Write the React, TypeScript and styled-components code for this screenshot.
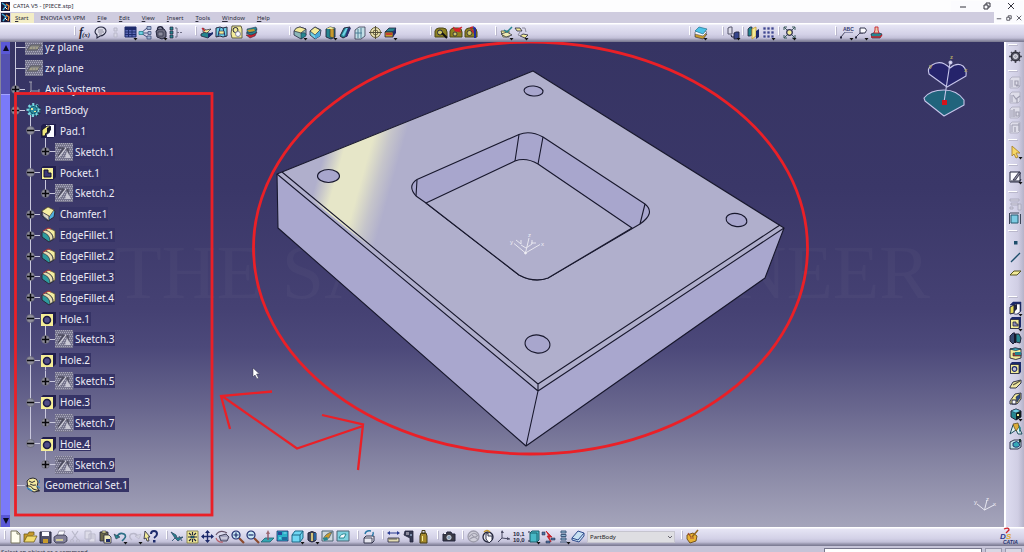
import React from 'react';
import styled, { createGlobalStyle } from 'styled-components';

const GlobalStyle = createGlobalStyle`
  * { box-sizing: border-box; }
  body { margin: 0; overflow: hidden; font-family: "Noto Sans", "Open Sans", sans-serif; }
  button, input, select { font: inherit; color: inherit; margin: 0; padding: 0; border: 0; background: none; }
  ul { list-style: none; margin: 0; padding: 0; }
`;

/* ---------- icon drawings, 15 x 15 ---------- */

type Shape = [d: string, fill?: string, stroke?: string, width?: number];
interface Drawing { shapes: Shape[]; texts?: [string, number, number, number, string][] }

const K = '#23253c';
const N = '#1d2a6b';
const T = '#25858f';
const C = '#6fd0e6';
const Y = '#f3eb98';
const O = '#c79a2c';
const G = '#8b8a9c';
const L = '#b9b8ca';
const W = '#fbfbff';
const R = '#c8232c';

const ring = (x: number, y: number, r: number) =>
  `M${x - r} ${y}a${r} ${r} 0 1 0 ${r * 2} 0a${r} ${r} 0 1 0 ${-r * 2} 0z`;

const faded = (d: string): Drawing => ({
  shapes: [['M2 4l2-2h8v9l-2 2h-8z', '#dedde9', '#b3b2c4', 1], ['M2 5h3v7h-3z', '#bfbecf'], [d, 'none', '#9e9db0', 1.2]],
});

const icons: Record<string, Drawing> = {
  formula: { shapes: [], texts: [['f', 1, 11, 12, K], ['(x)', 4, 12, 7, K]] },
  comment: { shapes: [['M2 7c0-3 3-5 6-5s5 2 5 4-3 5-6 5l-3 2 0-3c-1-1-2-2-2-3z', '#dcdbe8', K, 1.1], ['M5 5h5M5 7h6M6 9h3', 'none', G, 1]] },
  ghost: { shapes: [['M6 3h3v3h-3zM6 8h3v4h-3z', '#d8d7e6', L, 1]] },
  table: { shapes: [['M2 2h11v10h-11z', '#5b68b4', N, 1], ['M2 2h11v3h-11z', N], ['M2 7h11M2 9.5h11M5.5 4v8M9 4v8', 'none', N, 1]] },
  graph: { shapes: [['M3 8l6-5M3 8h7M3 8l6 4', 'none', '#44507c', 1], ['M1 6.500h4v3h-4z', C, T, 0.8], ['M9 1.500h4v3h-4zM10 6.500h3v3h-3zM9 11h4v3h-4z', '#9fb5d2', '#44507c', 0.8]] },
  lock: { shapes: [['M4.500 7V4.500a2.500 2.500 0 0 1 5.500 0V7', 'none', K, 1.4], ['M3 6l3-2h5l2 3v5l-4 2-5-2z', '#6b6a7e', K, 1], ['M5 7h5v4h-5z', G, K, 0.6]] },
  tree: { shapes: [['M2 2h3v3h-3zM2 6h3v3h-3zM2 10h3v3h-3z', T, K, 0.7], ['M7 3h2v9h-2M9 7.500h2M12 7.500h2', 'none', '#6f6e86', 1]] },
  material: { shapes: [['M2 9l4-2 7 2-4 4-7-2z', T, K, 0.8], ['M4 3l3 2 5-1-4 4-4-1z', Y, K, 0.7], ['M3 3l3 3', 'none', R, 1.4], ['M9 9l5-2v2l-5 4z', N]] },
  catalog: { shapes: [['M2 3l4-1 3 1 4-1v9l-4 1-3-1-4 1z', C, K, 1], ['M6 3l-2 8M9 3l2 8', 'none', N, 1], ['M5 6h5v3h-5z', Y, K, 0.6]] },
  measureBox: { shapes: [['M3 1h9l1 3v9h-10l-1-4z', Y, '#5f5c45', 1], [ring(6.5, 5, 2.5), 'none', K, 1], [ring(9, 9, 2.5), W, G, 1]] },
  layers: { shapes: [['M2 10l7-1 4-2-2 4-5 2z', R, K, 0.5], ['M2 8l6-1 5-3-1 4-5 2z', T, K, 0.5], ['M3 4l9-2 1 2-4 3-6 1z', T, K, 0.5], ['M3 5l7-1 1 2-6 1z', O]] },
  fillet: { shapes: [['M1 6q2-4 6-4l6 2v6l-5 4-7-4z', '#8bb6b8', K, 0.8], ['M1 6q2-4 6-4l6 2-5 4z', Y, K, 0.7], ['M8 8q4-1 5 1v2l-5 3z', T, K, 0.5]] },
  chamfer: { shapes: [['M2 6l5-4 6 3-1 6-5 3-5-4z', C, K, 0.8], ['M2 6l5-4 5 3-5 5z', Y, K, 0.7], ['M7 10l5-4v5l-5 3z', '#4aa8d8']] },
  draft: { shapes: [['M3 4l4-2 5 1v9l-4 2-5-2z', T, K, 0.9], ['M7 3l4 1v9l-4-1z', O, K, 0.6], ['M3 4l4-2 5 1-3 1z', Y]] },
  shell: { shapes: [['M2 11l4-8 6-1-3 9-4 2z', T, K, 1], ['M4 10l4-7 2 0-4 8z', C], ['M10 3l3 0-4 9-2 0z', '#2c3070']] },
  thickness: { shapes: [['M2 5l4-3h6v9l-4 3h-6z', '#c3dfe6', K, 0.7], ['M5 4v9M8 3v10M2 8h7', 'none', '#4a7f96', 1]] },
  thread: { shapes: [[ring(7.5, 7.5, 5), '#efe7b8', '#665f35', 1], [ring(7.5, 7.5, 2.5), 'none', '#665f35', 1], ['M7.500 1v13M1 7.500h13', 'none', '#554f3a', 1]] },
  removeFace: { shapes: [['M2 7l4-4h7l-3 4z', T, K, 0.8], ['M2 7h8v5h-8z', O, K, 0.8], ['M10 7l3-4v5l-3 4z', N], ['M3 9h6', 'none', R, 1.5]] },
  scene: { shapes: [['M1 6q1-3 4-3h4q4 0 4 4v5h-12z', '#8c8120', '#4c4718', 1], [ring(6, 7.5, 2.5), '#cfc766', K, 1], ['M8 8l5 5', 'none', '#111', 2]] },
  sceneStop: { shapes: [['M1 6q1-3 4-3h4q4 0 4 4v5h-12z', '#8c8120', '#4c4718', 1], [ring(6, 9, 2), '#cfc766', K, 0.8], ['M4 2l3 2 6-2-3 4 2 1-6-1z', '#e3202a', R, 0.7]] },
  scenePin: { shapes: [['M1 6q1-3 4-3h4q4 0 4 4v5h-12z', '#8c8120', '#4c4718', 1], [ring(5.5, 8, 2.5), '#cfc766', K, 0.8], ['M6 3l3-1M7 4l4 5', 'none', R, 1.4], ['M9 1l3 2 0 10-2 0 0-5z', '#1f2ca0']] },
  stack: { shapes: [['M2 6h8v6h-6z', Y, '#5c5b44', 0.9], ['M2 9l5 3 6-2-5-3z', '#efe9b0', K, 0.7], ['M5 5l3 2 5-5', 'none', T, 1.5]] },
  replace: { shapes: [['M1 3h5l2 3h-5z', Y, K, 0.8], ['M6 11l3-2 5 1-3 3z', Y, K, 0.8], ['M8 3h3l1 4M6 7l-2 3 3 1', 'none', G, 1]] },
  stackBlue: { shapes: [['M2 9l4-2 8 2-4 5-8-2z', O, K, 0.6], ['M2 7l4-2 8 2-4 4-8-2z', W, '#556', 0.6], ['M2 6l4-4 8 2-4 5z', '#4cc3e8', '#23718c', 0.7]] },
  swap: { shapes: [['M2 3l2-1h2v7h-4z', '#dcdbe8', '#55546a', 1], ['M8 8l2-1h3v6l-2 1h-3z', '#35458c', K, 0.9], ['M5 10q0 3 3 2', 'none', K, 1]] },
  mirror: { shapes: [['M2 4l2-2h2v8l-2 1h-2z', T, K, 0.8], ['M6 4l4-2v9l-4 3z', Y, O, 0.8], ['M10 6l3-2v8l-3 2z', N]] },
  grid: { shapes: [['M2 2h3v3h-3zM6 2h3v3h-3zM10 2h3v3h-3zM2 6h3v3h-3zM6 6h3v3h-3zM10 6h3v3h-3zM2 10h3v3h-3zM6 10h3v3h-3zM10 10h3v3h-3z', '#3e468f', '#d6d4ea', 0.7]] },
  explode: { shapes: [[ring(7.5, 7.5, 2.8), Y, '#335', 1.3], ['M2 5v-3h3M10 2h3v3M13 10v3h-3M5 13h-3v-3M2 2l3 3M13 2l-3 3M13 13l-3-3M2 13l3-3', 'none', '#3c5a5c', 1]] },
  abc: { shapes: [['M2 12l4-5', 'none', K, 0.8], ['M1 11.500h2v2h-2z', K], ['M5 7.500h9', 'none', '#777a9c', 0.8]], texts: [['ABC', 4, 6, 5, '#33386e']] },
  flag: { shapes: [['M1 11.500h2v2h-2z', K], ['M2 12l4-4h3', 'none', K, 0.8], ['M6 3h5q3 2 0 5h-5z', W, K, 0.9]] },
  stamp: { shapes: [['M2 9l5-2 6 2-2 4h-8z', T, K, 0.7], ['M2 12l9 0 2-2', 'none', R, 1.3], ['M6 2h3v3l1 3h-5l1-3z', '#e9c6a8', R, 0.9]] },

  newFile: { shapes: [['M3 2h6l3 3v9h-9z', '#fffef0', '#77755f', 1], ['M9 2v3h3', 'none', '#77755f', 1]] },
  open: { shapes: [['M1 13V5h4l1-2h5v3', O, '#6d5b1b', 0.8], ['M1 13l3-6h10l-3 6z', '#f2dc71', '#6d5b1b', 0.8]] },
  save: { shapes: [['M2 3h11v11h-11z', '#505069', K, 1], ['M4 3h7v4h-7z', W], ['M5 10h5v4h-5z', O]] },
  print: { shapes: [['M4 7l2-5h6l-2 5z', W, G, 0.8], ['M1 8l3-2h8l2 2v4l-3 2h-8l-2-2z', '#838199', K, 0.7], ['M3 11h7', 'none', Y, 1.4]] },
  cut: { shapes: [['M4 2l6 9M10 2l-6 9', 'none', L, 1.2], [ring(4, 12, 1.5), 'none', L, 1], [ring(10, 12, 1.5), 'none', L, 1]] },
  copy: { shapes: [['M2 2h6v8h-6zM6 5h6v8h-6z', '#dddce8', L, 1], ['M7 7h4M7 9h4', 'none', L, 0.8]] },
  paste: { shapes: [['M2 3h8v9h-8z', '#6a6748', K, 0.8], ['M4 2h4v2h-4z', Y, K, 0.6], ['M6 6h5l2 2v6h-7z', '#efebbb', K, 0.8], ['M8 10h4v3h-4z', N]] },
  undo: { shapes: [['M4 8q2-5 7-3 3 2 0 5l-2 2', 'none', '#2b6f86', 1.6], ['M1 5l2 5 4-2z', T, K, 0.5]] },
  redo: { shapes: [['M10 8q-2-5-7-3-3 3 1 6', 'none', L, 1.5], ['M13 5l-2 5-4-3z', '#d2d1e0', L, 0.7]] },
  help: { shapes: [['M2 2l5 6-2 0 1 4-2 0-1-3-2 1z', Y, K, 0.8], ['M8 5q0-3 3-3t3 3q0 2-3 4', 'none', N, 2], ['M10 11h2.500v2.500h-2.500z', N]] },
  fly: { shapes: [['M1 3l5 3 1 3 6-1-5 4-3-3z', T, '#2d4966', 0.8], ['M2 12l4-4M9 7l3 5', 'none', '#45607e', 1]] },
  fitAll: { shapes: [['M2 2h11v12h-11z', Y, '#8b8756', 1], ['M4 4l2 2M11 4l-2 2M4 12l2-2M11 12l-2-2M7.500 3v3M7.500 10v3M3 8h3M9 8h3', 'none', K, 1.2], ['M6 7h3v2h-3z', T, K, 0.7]] },
  pan: { shapes: [['M7.500 2v11M2 7.500h11', 'none', N, 1.4], ['M7.500 1l2.500 3h-5zM7.500 14l2.500-3h-5zM1 7.500l3-2.500v5zM14 7.500l-3-2.500v5z', N]] },
  rotate: { shapes: [['M1 6q3-5 9-3l2 1', 'none', '#66546a', 1.2], ['M4 7l7-2 3 3-2 4h-6z', '#a7a6c1', K, 0.8], ['M1 9q2 5 7 4', 'none', '#b8606a', 1.2], ['M6 9h6', 'none', W, 0.8]] },
  zoomIn: { shapes: [['M9 9l5 5', 'none', '#8c4a2d', 2.2], [ring(6, 6, 4), '#c6e6f2', N, 1.2], ['M3.500 6h5M6 3.500v5', 'none', N, 1.2]] },
  zoomOut: { shapes: [['M9 9l5 5', 'none', '#8c4a2d', 2.2], [ring(6, 6, 4), '#c6e6f2', N, 1.2], ['M3.500 6h5', 'none', N, 1.2]] },
  normalView: { shapes: [['M1 13l4-4h9l-4 4z', '#34a6b3', '#1e5f70', 0.8], ['M8 11V5', 'none', '#8b5468', 1.4], ['M8 1l2 4h-4z', '#9b6a74']] },
  multiView: { shapes: [['M2 2h11v10h-11z', '#2bb1c8', N, 0.8], ['M3 3h4v3h-4z', '#274a9b'], ['M7 8h5v3h-5z', '#1f6a9e'], ['M8.500 4h3M4 9h2', 'none', C, 1.4]] },
  cube: { shapes: [['M2 6l3-4h8v7l-3 4h-8z', '#6fd6f2', '#1b6685', 1], ['M2 6h8v7M10 6l3-4', 'none', '#1b6685', 1]] },
  shading: { shapes: [['M3 4q4-3 8 0v7q-4 4-8 0z', '#42495e', K, 1], ['M6 4h2v8h-2z', '#d0c27a'], ['M9 4h2v7h-2z', '#2563a0']] },
  hideShow: { shapes: [['M2 2h11v10h-11z', '#cdd7dc', '#4b6272', 1], ['M3 10q3-6 9-7l-3 6z', O, '#4b6272', 0.8], ['M3 9l4-1 1 3-4 1z', T]] },
  swapSpace: { shapes: [['M2 2h12v10h-12z', '#7fd1df', '#4b6272', 1], ['M4 9q2-5 7-4l-2 4z', W, T, 1]] },
  exchange: { shapes: [['M3 9l2-2h8v5l-2 2h-8z', '#e6e6ef', K, 0.9], ['M3 9h8v5', 'none', K, 0.8], ['M4 5q1-4 6-3M12 3q1 2-1 4', 'none', '#2675a5', 1.4]] },
  measure: { shapes: [['M3 4h9', 'none', '#283a90', 1], ['M1 4l3-2v4zM14 4l-3-2v4z', '#283a90'], ['M2 9h11v4h-11z', '#e4ddb3', K, 0.8], ['M4 9v2M6 9v2M8 9v2M10 9v2', 'none', K, 0.7]] },
  measureItem: { shapes: [['M4 2h8v11h-3v-4l-6-3z', '#353a52', K, 0.8], ['M5 3h3v3h-3z', G], ['M9 5h2v2h-2z', '#7b8ca8']] },
  inertia: { shapes: [['M5 4h5l1 3v7h-7v-7z', '#a68a2c', '#433a16', 1], ['M6 1.500h3v3h-3z', 'none', '#433a16', 1], ['M6 7h1v5h-1z', Y]] },
  camera: { shapes: [['M2 5h3l1-2h4l1 2h3v7h-12z', '#3a3a45', K, 1], [ring(8, 8.5, 2.2), '#8fa6bd', W, 0.6], ['M3 4h2v1h-2z', W]] },
  swirl: { shapes: [[ring(7.5, 7.5, 5.5), '#cfced9', '#9d9cab', 1.3], ['M3 8q5-7 9-1M4 10q5-4 8 1M6 6q3 4 6 0', 'none', '#9d9cab', 1.2]] },
  globe: { shapes: [[ring(7, 8, 5), '#e4e4ec', K, 1.3], ['M5 10V5l2-1v3l4 0v4l-3 3z', W, K, 0.9], ['M3 3q3-3 6 0', 'none', O, 1.5]] },
  axis: { shapes: [['M6 2v7l8 1M6 9l-4 4', 'none', '#4a4a62', 1], ['M6 1l2 3h-3zM14 10l-3-2v3z', '#4a4a62']] },
  decimals: { shapes: [], texts: [['10,1', 2, 7, 6, K], ['10,0', 2, 13, 6, K]] },
  body: { shapes: [['M4 4l2-2h7v9l-2 2h-7z', '#48b9c6', '#1a5b68', 1], ['M4 4h7v9', 'none', '#1a5b68', 0.9], ['M2 3h2M2 12h2', 'none', K, 1]] },
  spark: { shapes: [['M5 2l3 5-2 0 4 6-2-5 3 0z', R, R, 0.8], ['M1 3h3v3h-3zM10 9h4v2h-4zM5 12h4v2h-4z', '#4e72a4', K, 0.5]] },
  springs: { shapes: [['M5 2h5v2h-5zM5 5.500h5v2h-5zM5 9h5v2h-5z', '#93b9d5', '#415a7c', 1], ['M4 13h7', 'none', '#415a7c', 1]] },
  part: { shapes: [['M1 9l6-7 6 2v3l-5 6-7-2z', '#c7e0f2', '#2f4b8c', 1], ['M1 9l6 2 6-7', 'none', '#2f4b8c', 1]] },
  paint: { shapes: [['M2 6l6-2 4 3-1 5-6 2-3-4z', '#e8b234', '#6b4a14', 0.9], ['M7 8l6-7', 'none', '#92651d', 1.5], ['M3 4l3 4M5 9h4', 'none', '#a8502c', 1.2]] },

  gear: { shapes: [['M7.500 1v13M1 7.500h13M3 3l9 9M12 3l-9 9', 'none', '#4a4957', 1.6], [ring(7.5, 7.5, 4.2), '#6b6a7a', '#30303c', 1.4], [ring(7.5, 7.5, 2), '#a9a9b8', W, 0.8]] },
  f1: faded('M7 6h3v4h-3zM8 11h4'),
  f2: faded('M5 5l3 4 4-3M9 9v4'),
  f3: faded('M6 4v8M8 7h3v4h-3z'),
  f4: faded('M4 5h7M7 7v5M11 3v8'),
  select: { shapes: [['M4 2l8 7-4 0 2 4-2 1-2-4-2 2z', '#f6d766', '#aa842f', 0.9]] },
  sketcher: { shapes: [['M2 3h10v10h-10z', W, K, 1], ['M5 11l6-8 1.500 1-5 7z', '#8d8c9e', K, 0.8], ['M3 12h9l1-2', 'none', K, 1]] },
  steps: { shapes: [['M2 3h9v2h-9zM3 7h7v2h-7zM2 11h3v2h-3zM10 8h3v6h-3z', '#d5d4e2', '#a9a8bb', 0.9]] },
  ruler: { shapes: [['M3 4h7v8h-7z', '#7dcbe3', '#24586f', 1], ['M2 2h9M12.500 3v10M1.500 2v11', 'none', '#3d4658', 1]] },
  point: { shapes: [['M6 6h3.500v3.500h-3.500z', '#1c4d6b']] },
  line: { shapes: [['M3 12l9-9', 'none', '#1c4d6b', 1.3]] },
  plane: { shapes: [['M2 10l4-4h7l-4 4z', Y, '#57551f', 1]] },
  pad: { shapes: [['M2 4l3-3h8v9l-3 3h-3v-9h-5z', N, N, 0.5], ['M7 3h5v8l-3 2h-3z', W, K, 0.6], ['M2 6l4-2v8l-4 1z', '#e9dd5a', K, 1], ['M6 4l3-1v5l-3 3z', K]] },
  pocket: { shapes: [['M2 3l2-2h9v10l-2 2h-9z', N], ['M2.500 3.500h8.500v9h-8.500z', Y, K, 0.8], ['M5 6h3v2h2v2h-5z', '#8c8bb5', K, 0.8]] },
  shaft: { shapes: [['M2 5l3-3 2 0v9l-2 2-3-3z', '#35476e', K, 1], ['M8 3l3 0 2 4-1 5-4-1z', T, K, 1], ['M6 3h2v9h-2z', '#15182b']] },
  groove: { shapes: [['M2 3q5-2 11 0v9q-5 3-11 0z', Y, K, 0.9], ['M2 3q5-2 11 0-5 3-11 0z', '#3ab1c3', K, 0.7], ['M5 7h8v3h-8z', '#a8442f', K, 0.6], ['M7 6h6v3h-6z', T]] },
  hole: { shapes: [['M2 3l2-2h9v10l-2 2h-9z', N], ['M2.500 3.500h8.500v9h-8.500z', Y, K, 0.8], [ring(6.5, 8, 2.3), '#c4c3dc', N, 1.2]] },
  rib: { shapes: [['M2 11l3-5 8-2v3l-5 5h-6z', '#efe7a2', K, 0.9], ['M5 9l7-4', 'none', '#5b5840', 1.3]] },
  slot: { shapes: [['M2 10l5-7 6-1v6l-4 5h-7z', Y, K, 0.9], ['M4 9h4v4h-4z', W, K, 1], ['M8 6l4-3v4l-3 4z', '#2d4d86', K, 0.6]] },
  solid: { shapes: [['M3 5l5-2 5 2v6l-5 3-5-3z', T, K, 1], ['M3 5l5-2 5 2-5 2z', C, K, 0.5], ['M8 7l5-2v6l-5 3z', '#101c1c'], ['M9 8h2v2h-2z', Y]] },
  loft: { shapes: [['M2 13l3-9h5l4 9h-4l-2-4z', '#dff1f2', '#1d4c5a', 1], ['M5 3l5-1 1 4-3 4-2-4z', '#dcae3a', '#51431b', 0.7], ['M11 4l2 3-2 5', T]] },
  removeLoft: { shapes: [['M2 13v-7l4-2h7v7l-3 2z', '#bfe1e4', K, 0.9], ['M5 7q4-3 6 0t-1 4-5-1z', '#35a9b6', N, 0.9], ['M11 3l2 0 0 3-2 1z', '#1b332c']] },
};

const IconSvg = styled.svg`
  display: block;
  width: 15px;
  height: 15px;
  overflow: visible;
`;

function Icon({ name, arrow }: { name: string; arrow?: boolean }) {
  const { shapes, texts } = icons[name];
  return (
    <IconSvg viewBox="0 0 15 15" aria-hidden="true">
      {shapes.map(([d, fill = K, stroke, width], i) => (
        <path key={i} d={d} fill={fill} stroke={stroke} strokeWidth={width} />
      ))}
      {texts?.map(([t, x, y, size, color]) => (
        <text key={t} x={x} y={y} fontSize={size} fill={color} fontWeight="700"
          fontStyle={name === 'formula' ? 'italic' : 'normal'}
          fontFamily={name === 'formula' ? '"Liberation Serif", serif' : '"Liberation Sans", sans-serif'}>{t}</text>
      ))}
      {arrow && <path d="M10.500 13h4l-2 2.500z" fill="#111" />}
    </IconSvg>
  );
}

/* ---------- window chrome ---------- */

const Window = styled.div`
  display: flex;
  flex-direction: column;
  height: 100vh;
  overflow: hidden;
  background: #cfcde3;
  color: #2c2c3c;
  font-size: 6px;
  line-height: 8px;
`;

const TitleBar = styled.header`
  display: flex;
  align-items: center;
  flex: 0 0 12px;
  padding: 0 1px;
  gap: 2px;
  background: #fdfdfe;
`;

const Title = styled.h1`
  flex: 1;
  margin: 0;
  font-size: 6px;
  font-weight: 400;
  line-height: 8px;
`;

const ControlGroup = styled.div<{ $pitch: number }>`
  display: flex;
  background: #fbfbfe;
  button { width: ${p => p.$pitch}px; height: 11px; display: grid; place-items: center; }
`;

const MenuBar = styled.nav`
  display: flex;
  align-items: center;
  flex: 0 0 11px;
  padding-left: 1px;
  background: #cfccdf;
`;

const MenuItem = styled.button<{ $active?: boolean }>`
  height: 10px;
  padding: 0 6px 0 ${p => (p.$active ? 4 : 6)}px;
  white-space: nowrap;
  background: ${p => (p.$active ? '#f3edc6' : 'transparent')};
  u { text-underline-offset: 1px; }
`;

const Spacer = styled.div`flex: 1;`;

const Bar = styled.div`
  display: flex;
  flex: 0 0 19px;
  align-items: center;
  background: linear-gradient(#ffffff 0 1px, #e6e5f5 2px, #d3d1e7 60%, #c2c0d8 15px, #9796ae 17px, #77768e 19px);
`;

const Group = styled.div<{ $gap: number; $vertical?: boolean }>`
  display: flex;
  flex: none;
  flex-direction: ${p => (p.$vertical ? 'column' : 'row')};
  align-items: center;
  ${p => (p.$vertical ? 'margin-top' : 'margin-left')}: ${p => p.$gap}px;
`;

const Grip = styled.span<{ $vertical?: boolean }>`
  width: ${p => (p.$vertical ? 9 : 1)}px;
  height: ${p => (p.$vertical ? 1 : 9)}px;
  align-self: flex-start;
  margin: ${p => (p.$vertical ? '0 0 4px 2px' : '1px 3px 0 0')};
  background: #ffffff;
  box-shadow: 1px 1px 0 #bab8cc;
`;

const ToolButton = styled.button`
  flex: none;
  width: 15px;
  height: 15px;
`;

const labelOf = (n: string) => n.replace(/([A-Z])/g, ' $1').toLowerCase();

type GroupDef = [gap: number, names: string];

/* a trailing "*" on a name marks a tool with a fly-out arrow */
function Tools({ groups, vertical }: { groups: GroupDef[]; vertical?: boolean }) {
  return (
    <>
      {groups.map(([gap, names], i) => (
        <Group key={i} $gap={gap} $vertical={vertical}>
          <Grip $vertical={vertical} />
          {names.split(' ').map(n => {
            const name = n.replace('*', '');
            return (
              <ToolButton key={n} aria-label={labelOf(name)}>
                <Icon name={name} arrow={n.endsWith('*')} />
              </ToolButton>
            );
          })}
        </Group>
      ))}
    </>
  );
}

const topGroups: GroupDef[] = [
  [74, 'formula comment ghost table* graph lock* tree'],
  [12, 'material catalog measureBox layers'],
  [30, 'fillet* chamfer draft* shell thickness thread removeFace*'],
  [32, 'scene sceneStop scenePin'],
  [16, 'stack* replace*'],
  [160, 'stackBlue*'],
  [14, 'swap*'],
  [1, 'mirror grid*'],
  [2, 'explode*'],
  [38, 'abc* flag* stamp'],
];

const bottomGroups: GroupDef[] = [
  [4, 'newFile open save print cut copy paste undo* redo* help'],
  [8, 'fly fitAll pan rotate zoomIn zoomOut normalView multiView cube* shading* hideShow swapSpace'],
  [7, 'exchange'],
  [6, 'measure measureItem inertia'],
  [6, 'camera'],
  [6, 'swirl globe axis decimals body* spark springs* part'],
];

const sideGroups: GroupDef[] = [
  [2, 'gear'],
  [6, 'f1 f2 f3 f4'],
  [4, 'select*'],
  [5, 'sketcher*'],
  [7, 'steps ruler'],
  [4, 'point line plane'],
  [16, 'pad* pocket* shaft groove hole rib slot solid* loft removeLoft'],
];

const Main = styled.main`
  display: grid;
  grid-template-columns: 10px 1fr 20px;
  flex: 1;
  min-height: 0;
`;

const ScrollBar = styled.div`
  display: flex;
  flex-direction: column;
  border-left: 1px solid #85849c;
  background: #5451b0;
  button { flex: 0 0 12px; display: grid; place-items: center; background: #5a58d6; }
`;

const Thumb = styled.div`
  flex: 1;
  margin-top: 40px;
  background: #7a7afa;
  border-top: 1px solid #a3a3ff;
`;

const SideBar = styled.aside`
  border-left: 2px solid #ffffff;
  background: linear-gradient(90deg, #dddcf0, #d0cee4 12px, #b5b3c9 18px);
`;

const Viewport = styled.section`
  position: relative;
  overflow: hidden;
  background: linear-gradient(#363463 0%, #3a3768 30%, #454173 55%, #4c497a 63%, #6a688f 76%, #8988a5 88%, #a5a5bb 100%);
`;

const Canvas = styled.svg`
  position: absolute;
  inset: 0;
  width: 100%;
  height: 100%;
  pointer-events: none;
`;

/* ---------- specification tree ---------- */

const TreeList = styled.ul`
  position: relative;
  display: flex;
  flex-direction: column;
  height: 459px;
  margin-top: -5px;
  color: #eeedf6;
  font-size: 10px;
  line-height: 14px;
`;

const Row = styled.li`
  display: flex;
  flex: 1 1 0;
  align-items: stretch;
`;

const wire = 'linear-gradient(#c9c8dc, #c9c8dc)';
type Run = 'full' | 'up' | 'down' | 'none';
const runSize = { full: '100%', up: '50%', down: '50%', none: '0%' };

const Guide = styled.span<{ $run: Run; $stub?: boolean }>`
  display: flex;
  flex: 0 0 15px;
  align-items: center;
  padding-left: 1px;
  background-image: ${wire}, ${wire};
  background-repeat: no-repeat;
  background-size: 1px ${p => runSize[p.$run]}, ${p => (p.$stub ? '10px' : '0')} 1px;
  background-position: 5px ${p => (p.$run === 'down' ? '100%' : '0')}, 5px 50%;
`;

const Slot = styled.span<{ $stem?: boolean }>`
  display: flex;
  flex: 0 0 18px;
  align-items: center;
  background: ${p => (p.$stem ? wire : 'none')} 5px 100% / 1px 50% no-repeat;
`;

const Label = styled.span<{ $current?: boolean }>`
  align-self: center;
  margin-left: 1px;
  padding: 0 1px;
  background: #353366;
  white-space: nowrap;
  text-decoration: ${p => (p.$current ? 'underline' : 'none')};
`;

const Toggle = styled.button`
  display: block;
  width: 9px;
  height: 9px;
  svg { display: block; }
`;

function Node({ open }: { open: boolean }) {
  return (
    <Toggle aria-label={open ? 'Collapse' : 'Expand'}>
      <svg width="9" height="9" viewBox="0 0 9 9">
        <circle cx="4.500" cy="4.500" r="4" fill="#8f8e9c" stroke="#63626f" strokeWidth="0.600" />
        <path d={open ? 'M1 4.500h7' : 'M1 4.500h7M4.500 1v7'} stroke="#08080c" strokeWidth="1.500" />
      </svg>
    </Toggle>
  );
}

function Hatch({ h }: { h: number }) {
  return (
    <>
      <rect width="18" height={h} fill="#77768e" />
      {Array.from({ length: h / 2 }, (_, i) => (
        <path key={i} d={`M${i % 2} ${i * 2 + 0.5}h17`} stroke="#a9a8ba" strokeDasharray="1 1" />
      ))}
    </>
  );
}

function TreeIcon({ kind }: { kind: string }) {
  if (kind === 'plane') {
    return (
      <svg width="18" height="16" viewBox="0 0 18 16">
        <Hatch h={16} />
        <path d="M2 11l4-5h10l-4 5z" fill="#8b8a86" stroke="#5a5a60" />
        <path d="M5 9h9" stroke="#b9b38c" strokeDasharray="2 1" />
      </svg>
    );
  }
  if (kind === 'sketch') {
    return (
      <svg width="18" height="18" viewBox="0 0 18 18">
        <Hatch h={18} />
        <path d="M3 13l5-7h5v8M3 5h6" fill="none" stroke="#4c4b5e" strokeWidth="1.500" />
        <path d="M10 15l2-7 4 7z" fill="#c9c8d4" />
        <path d="M4 14l7-9" stroke="#d5d4de" strokeWidth="1.200" />
      </svg>
    );
  }
  if (kind === 'axes') {
    return (
      <svg width="18" height="16" viewBox="0 0 18 16">
        <path d="M6 1v9l8 0M6 10l-3 3M14 8v4M4 1h3" fill="none" stroke="#a3a2b2" />
      </svg>
    );
  }
  if (kind === 'body') {
    return (
      <svg width="18" height="16" viewBox="0 0 18 16">
        <circle cx="8.500" cy="8" r="5.500" fill="#2b8da0" stroke="#7fd6e0" strokeWidth="3" strokeDasharray="2 2" />
        <circle cx="8.500" cy="8" r="3.500" fill="#2b8da0" stroke="#124057" strokeDasharray="2 1" />
        <path d="M6 6h2v2h-2zM9 9h2v1h-2z" fill="#e8e6a0" />
        <path d="M12 3l3 3v5l-3 3" fill="none" stroke="#14354c" strokeWidth="1.500" strokeDasharray="2 1" />
      </svg>
    );
  }
  if (kind === 'set') {
    return (
      <svg width="18" height="16" viewBox="0 0 18 16">
        <path d="M2 4q2-3 6-3 4 0 5 4l-1 5 2 4-5 1-6-3z" fill="#f2e9a0" stroke="#2b2b33" />
        <path d="M4 4q3 3 6 0M5 7q3 2 6 1M1 9q5-1 7 3l7 2" fill="none" stroke="#2b2b33" />
        <path d="M2 11q3 1 5 3M12 9l3 2" stroke="#3d86c0" strokeWidth="1.500" fill="none" />
        <path d="M14.500 3v3" stroke="#3d86c0" />
      </svg>
    );
  }
  if (kind === 'chamfer') {
    return (
      <svg width="18" height="16" viewBox="0 0 18 16">
        <path d="M2 5l6-4 7 4-1 6-6 4-6-5z" fill="#4faee0" stroke="#2b2738" />
        <path d="M2 5l6-4 6 3-5 7-6-3z" fill="#f5eea2" stroke="#5c5333" strokeWidth="0.800" />
        <path d="M2 6l7 4v5l-6-5z" fill="#d9d4c4" stroke="#2b2738" strokeWidth="0.800" />
      </svg>
    );
  }
  if (kind === 'fillet') {
    return (
      <svg width="18" height="16" viewBox="0 0 18 16">
        <path d="M2 5l6-4 7 4-1 7-5 3-7-5z" fill="#2d9a9d" stroke="#2b2738" />
        <path d="M5 3l4-2 6 3v7l-2 1q1-6-8-9z" fill="#f5eea2" stroke="#5c5333" strokeWidth="0.800" />
        <path d="M2 5l3-2q8 2 8 9l-3 2q0-7-8-9z" fill="#e9dfb4" stroke="#2b2738" strokeWidth="0.700" />
        <path d="M3 4l5-3 3 1" fill="none" stroke="#b63a44" />
      </svg>
    );
  }
  return (
    <svg width="18" height="16" viewBox="0 0 18 16">
      <path d="M1 3l2-2h13v11l-3 3h-12z" fill="#201d4c" />
      {kind === 'pad' && (
        <>
          <path d="M6 2h8v12h-7z" fill="#fbfbff" />
          <path d="M2 7l5-4 3 0-1 7-3 0-1 3h-3z" fill="#efe67a" stroke="#15152a" />
          <path d="M7 5l4-2v4l-3 3v2l-1-2z" fill="#15152a" />
        </>
      )}
      {kind === 'pocket' && (
        <>
          <path d="M2 3h11v11h-11z" fill="#f5ee96" />
          <path d="M4 5h4v3h3v4h-7z" fill="#3c397a" stroke="#15152a" />
        </>
      )}
      {kind === 'hole' && (
        <>
          <path d="M1 3h12v12h-12z" fill="#f5ee96" />
          <circle cx="7" cy="9" r="3.500" fill="#4f4d88" stroke="#1b1a44" strokeWidth="1.500" />
        </>
      )}
    </svg>
  );
}

interface Item { label: string; icon: string; level: number; open?: boolean; leaf?: boolean; stem?: boolean; current?: boolean; last?: boolean }

const feature = (label: string, icon: string, sketch: string, last?: boolean): Item[] => [
  { label, icon, level: 1, open: true, stem: true, current: last, last },
  { label: sketch, icon: 'sketch', level: 2, open: false, last },
];

const items: Item[] = [
  { label: 'yz plane', icon: 'plane', level: 0, leaf: true },
  { label: 'zx plane', icon: 'plane', level: 0, leaf: true },
  { label: 'Axis Systems', icon: 'axes', level: 0 },
  { label: 'PartBody', icon: 'body', level: 0, open: true, stem: true },
  ...feature('Pad.1', 'pad', 'Sketch.1'),
  ...feature('Pocket.1', 'pocket', 'Sketch.2'),
  { label: 'Chamfer.1', icon: 'chamfer', level: 1 },
  { label: 'EdgeFillet.1', icon: 'fillet', level: 1 },
  { label: 'EdgeFillet.2', icon: 'fillet', level: 1 },
  { label: 'EdgeFillet.3', icon: 'fillet', level: 1 },
  { label: 'EdgeFillet.4', icon: 'fillet', level: 1 },
  ...feature('Hole.1', 'hole', 'Sketch.3'),
  ...feature('Hole.2', 'hole', 'Sketch.5'),
  ...feature('Hole.3', 'hole', 'Sketch.7'),
  ...feature('Hole.4', 'hole', 'Sketch.9', true),
  { label: 'Geometrical Set.1', icon: 'set', level: 0, leaf: true, last: true },
];

function runAt(item: Item, col: number): Run {
  if (col === 0) return item.level === 0 && item.last ? 'up' : 'full';
  if (col === 1) return item.level === 1 ? (item.last ? 'up' : 'full') : item.last ? 'none' : 'full';
  return 'up';
}

function Tree() {
  return (
    <TreeList aria-label="Specification tree">
      {items.map(item => (
        <Row key={item.label}>
          {Array.from({ length: item.level + 1 }, (_, col) => (
            <Guide key={col} $run={runAt(item, col)} $stub={col === item.level}>
              {col === item.level && !item.leaf && <Node open={!!item.open} />}
            </Guide>
          ))}
          <Slot $stem={item.stem}><TreeIcon kind={item.icon} /></Slot>
          <Label $current={item.current}>{item.label}</Label>
        </Row>
      ))}
    </TreeList>
  );
}

/* ---------- 3D scene ---------- */

const pocketRim = 'M417 179.500L519 134.500Q530 130 543 137L645 204Q656 213 640 224L548 278Q534 283 519 275L426 203L416 196Q407 186 417 179.500z';
const pocketFloor = 'M426 203L515 161Q526 157 538 164L632 228L548 278Q534 283 519 275z';

function Scene() {
  return (
    <Canvas viewBox="10 42 994 485">
      <defs>
        <linearGradient id="sheen" gradientUnits="userSpaceOnUse" x1="325" y1="150" x2="396" y2="170">
          <stop offset="0" stopColor="#e6e6c8" stopOpacity="0" />
          <stop offset="0.250" stopColor="#e6e6c8" />
          <stop offset="0.580" stopColor="#e6e6c8" />
          <stop offset="0.800" stopColor="#e6e6c8" stopOpacity="0.400" />
          <stop offset="1" stopColor="#e6e6c8" stopOpacity="0" />
        </linearGradient>
      </defs>

      <text x="930" y="298" textAnchor="end" fontSize="76" fontFamily='"Liberation Serif", serif' fill="#ffffff" opacity="0.025">THE SAVVY ENGINEER</text>

      <path d="M277 174L533 71L784 228L765 278L526 446L278 228z" fill="#a9a7ce" />
      <path d="M277 174L533 71L784 228L538 391z" fill="#b0afcc" />
      <path d="M279 173L533 71L780 225L538 384z" fill="url(#sheen)" />
      <g stroke="#17172c" strokeWidth="1.100" strokeLinejoin="round">
        <path d="M277 174L533 71L784 228L765 278L526 446L278 228z" fill="none" />
        <path d="M282 172L538 384L780 225M277 174L538 391L784 228M538 384V391L526 446" fill="none" />
        <path d={pocketRim} fill="#a8a6cd" />
        <path d={pocketFloor} fill="#b0afcc" />
        <path d="M519 134.500L515 161M543 137L538 164M417 180L416 196M645 204L640 224" fill="none" />
        <ellipse cx="533.500" cy="91" rx="9.500" ry="5" fill="#a8a6cd" transform="rotate(5 533.500 91)" />
        <ellipse cx="328.500" cy="176" rx="11" ry="6.500" fill="#a8a6cd" />
        <ellipse cx="736.500" cy="220" rx="10.500" ry="6.500" fill="#a8a6cd" transform="rotate(10 736.500 220)" />
        <ellipse cx="537.500" cy="344" rx="12.500" ry="9" fill="#a8a6cd" transform="rotate(8 537.500 344)" />
      </g>

      <g fill="none" stroke="#e8e7f0" strokeWidth="1" fontFamily='"Liberation Sans", sans-serif' fontSize="6">
        <path d="M525.500 253L514 243.500M525.500 253L529 238M525.500 253L540 244.500M516 240l5 4v-4M521 245l5 3 6-4v-4M536 243h-5" />
        <circle cx="525.500" cy="253" r="1" fill="#ffffff" />
        <path d="M984.500 510L977 504M984.500 510L987 500M984.500 510L994 505" />
        <g fill="#efeef5" stroke="none">
          <text x="510" y="244">y</text><text x="528" y="237">z</text><text x="541" y="246">x</text>
          <text x="974" y="504">y</text><text x="986" y="501">z</text><text x="993" y="506">x</text>
        </g>
      </g>

      <g stroke="#c6c5ea" strokeWidth="1.100" strokeLinejoin="round">
        <path d="M929 74Q927 68 932 65Q941 59 950 68Q957 62 963 66Q967 70 966 76L947 87z" fill="#25236b" />
        <path d="M924 98Q930 90 944 90Q957 90 964 100L964 105L944 116L925 101z" fill="#20647c" />
        <path d="M950 63L944 102" fill="none" />
        <circle cx="950.500" cy="62.500" r="1.500" fill="#e3e2f4" />
        <rect x="942" y="100" width="5" height="5" fill="#d4141c" stroke="none" />
        <g stroke="none" fill="#b3a765" fontFamily='"Liberation Sans", sans-serif' fontSize="6" fontWeight="700">
          <text x="950" y="59">z</text><text x="929" y="68">y</text><text x="964" y="72">x</text>
        </g>
      </g>
    </Canvas>
  );
}

function Annotations() {
  return (
    <Canvas viewBox="10 42 994 485">
      <g fill="none" stroke="#ea2027" strokeWidth="2.800">
        <rect x="15.500" y="93.500" width="196.500" height="421.500" />
        <ellipse cx="530.500" cy="248" rx="277" ry="206" />
        <path d="M272 391.500L221 396L230 429M222 396L297 448.500L363 426M322 415L363 424.500L358 470" strokeWidth="2.300" />
      </g>
      <path d="M253 368v9l2-2 2 4 1.500-1-2-4h3z" fill="#ffffff" stroke="#33334a" strokeWidth="0.500" />
    </Canvas>
  );
}

/* ---------- bottom of the window ---------- */

const BodyPicker = styled.label`
  display: grid;
  align-items: center;
  flex: 0 0 88px;
  margin-left: 1px;
  > * { grid-area: 1 / 1; }
  select {
    appearance: none;
    width: 100%;
    height: 12px;
    padding-left: 2px;
    border: 1px solid #c6c5cf;
    background: #dedee2;
    color: #222222;
    line-height: 8px;
  }
  svg { justify-self: end; margin-right: 2px; pointer-events: none; }
`;

const StatusBar = styled.footer`
  display: flex;
  flex: 0 0 6px;
  align-items: flex-start;
  gap: 3px;
  padding: 2px 2px 0 1px;
  overflow: hidden;
  background: #c6c4d8;
  p { flex: 1; margin: 0; }
  input { flex: 0 0 158px; height: 14px; border: 1px solid #77768c; background: #ffffff; }
  button { width: 17px; height: 14px; border: 1px solid #9a99ae; background: #d8d7e4; }
`;

function CatiaMark() {
  return (
    <svg width="10" height="9" viewBox="0 0 10 9" aria-hidden="true">
      <rect width="9" height="9" fill="#16183a" />
      <path d="M1 1l4 3-3 4" fill="none" stroke="#3fa6d0" strokeWidth="1.500" />
      <path d="M5 2l3 2-1 4" fill="none" stroke="#e88a3a" strokeWidth="1.300" />
      <path d="M4 5l2 2" stroke="#ffffff" />
    </svg>
  );
}

function WindowControls({ pitch, size }: { pitch: number; size: number }) {
  return (
    <ControlGroup $pitch={pitch}>
      {[['Minimize', 'M0 4h6'], ['Restore', 'M0 2h4v4h-4zM2 2v-2h4v4h-2'], ['Close', 'M0 0l6 6M6 0l-6 6']].map(([label, d]) => (
        <button key={label} aria-label={label}>
          <svg width={size} height={size} viewBox="-1 -1 8 8"><path d={d} fill="none" stroke="#33333d" /></svg>
        </button>
      ))}
    </ControlGroup>
  );
}

const menus = ['ENOVIA V5 VPM', 'File', 'Edit', 'View', 'Insert', 'Tools', 'Window', 'Help'];

export default function App() {
  return (
    <Window>
      <GlobalStyle />
      <TitleBar>
        <CatiaMark />
        <Title>CATIA V5 - [PIECE.stp]</Title>
        <WindowControls pitch={24} size={8} />
      </TitleBar>
      <MenuBar>
        <CatiaMark />
        <MenuItem $active><u>S</u>tart</MenuItem>
        {menus.map((m, i) => (
          <MenuItem key={m}>{i === 0 ? m : <><u>{m[0]}</u>{m.slice(1)}</>}</MenuItem>
        ))}
        <Spacer />
        <WindowControls pitch={10} size={6} />
      </MenuBar>
      <Bar role="toolbar" aria-label="Part tools"><Tools groups={topGroups} /></Bar>
      <Main>
        <ScrollBar>
          <button aria-label="Scroll up"><svg width="8" height="8"><path d="M4 1l3 6h-6z" fill="#0a0a20" /></svg></button>
          <Thumb />
          <button aria-label="Scroll down"><svg width="8" height="8"><path d="M4 7l3-6h-6z" fill="#0a0a20" /></svg></button>
        </ScrollBar>
        <Viewport>
          <Scene />
          <Tree />
          <Annotations />
        </Viewport>
        <SideBar><Tools groups={sideGroups} vertical /></SideBar>
      </Main>
      <Bar role="toolbar" aria-label="Standard tools">
        <Tools groups={bottomGroups} />
        <BodyPicker>
          <select aria-label="In work object" defaultValue="PartBody"><option>PartBody</option></select>
          <svg width="6" height="4"><path d="M1 1l2 2 2-2" fill="none" stroke="#66656f" /></svg>
        </BodyPicker>
        <Tools groups={[[6, 'paint']]} />
        <Spacer />
        <svg width="25" height="19" viewBox="0 0 25 19" role="img" aria-label="CATIA">
          <path d="M5 2q5-2 5 1l-3 3" fill="none" stroke="#d0232b" strokeWidth="1.300" />
          <g fontFamily='"Liberation Sans", sans-serif' fontStyle="italic" fontWeight="700">
            <text x="1" y="12" fontSize="8" fill="#2c3a90">D</text>
            <text x="7" y="12" fontSize="8" fill="#e0ac2c">S</text>
            <text x="4" y="17" fontSize="5" fill="#23306f">CATIA</text>
          </g>
        </svg>
      </Bar>
      <StatusBar>
        <p>Select an object or a command</p>
        <input aria-label="Power input" />
        <button aria-label="Command list" />
        <button aria-label="Dialog" />
      </StatusBar>
    </Window>
  );
}
